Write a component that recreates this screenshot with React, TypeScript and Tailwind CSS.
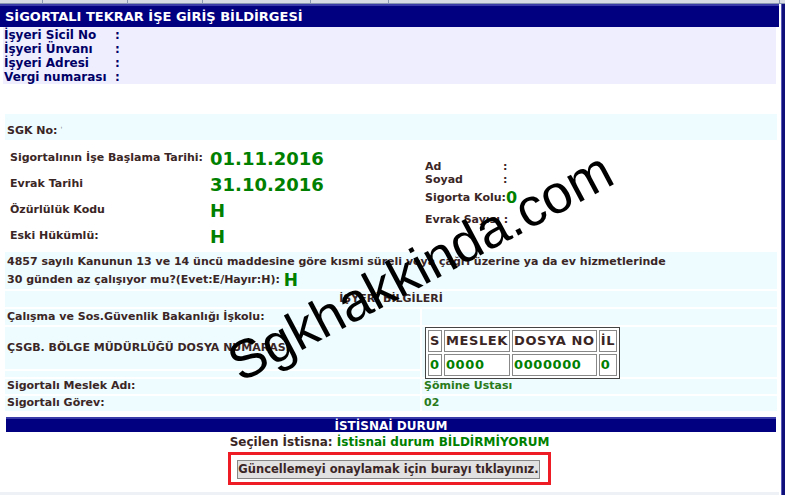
import React from "react";

const label = "text-[#3b2626] font-bold";
const green = "text-[#008000] font-bold";

function Cell({ className = "", children }: { className?: string; children?: React.ReactNode }) {
  return <div className={`bg-[#eefcff] ${className}`}>{children}</div>;
}

export default function App() {
  return (
    <div className="relative h-[495px] w-[785px] overflow-hidden bg-white font-['DejaVu_Sans',Verdana,sans-serif] text-[11px]">
      {/* tab strip remnants */}
      <div className="flex h-[4px] border-b border-[#8a97b0] bg-[#d6dbe4]">
        {[43, 85, 75, 108, 78, 391].map((w, i) => (
          <div key={i} className="h-full border-r border-[#8a97b0]" style={{ width: w }} />
        ))}
      </div>

      <div className="flex h-[491px]">
        <div className="flex w-[779px] flex-col">
          {/* title */}
          <div className="flex h-[23px] items-center border-t-2 border-[#3a3aa8] bg-[#000080] pl-[5px] text-[13px] font-bold text-white">
            SİGORTALI TEKRAR İŞE GİRİŞ BİLDİRGESİ
          </div>

          {/* employer box */}
          <div className="mx-[3px] grid h-[57px] grid-cols-[111px_1fr] content-start bg-[#eeeeff] pl-[1px] pt-[1px] text-[12px] leading-[14px] font-bold text-[#000066]">
            <span>İşyeri Sicil No</span>
            <span>:</span>
            <span>İşyeri Ünvanı</span>
            <span>:</span>
            <span>İşyeri Adresi</span>
            <span>:</span>
            <span>Vergi numarası</span>
            <span>:</span>
          </div>

          <div className="h-[30px]" />

          {/* SGK no */}
          <div className="ml-[5px] mr-[2px] flex h-[26px] items-end bg-[#eefcff] pb-[1px] pl-[2px]">
            <span className={label}>SGK No:</span>
            <span className="mb-[4px] ml-[3px] text-[7px] text-[#555]">ˈ</span>
          </div>

          {/* person info */}
          <div className="flex h-[112px]">
            <div className="w-[420px] pl-[10px] pt-[5px]">
              {[
                ["Sigortalının İşe Başlama Tarihi:", "01.11.2016"],
                ["Evrak Tarihi", "31.10.2016"],
                ["Özürlülük Kodu", "H"],
                ["Eski Hükümlü:", "H"],
              ].map(([l, v]) => (
                <div key={l} className="flex h-[26px] items-center">
                  <span className={`w-[200px] ${label}`}>{l}</span>
                  <span className={`${green} text-[18px]`}>{v}</span>
                </div>
              ))}
            </div>
            <div className="pl-[5px] pt-[21px]">
              <div className="flex h-[13px] items-center">
                <span className={`w-[78px] ${label}`}>Ad</span>
                <span className={label}>:</span>
              </div>
              <div className="flex h-[13px] items-center">
                <span className={`w-[78px] ${label}`}>Soyad</span>
                <span className={label}>:</span>
              </div>
              <div className="flex h-[22px] items-center">
                <span className={label}>Sigorta Kolu:</span>
                <span className={`${green} text-[16px]`}>0</span>
              </div>
              <div className="flex h-[22px] items-center">
                <span className={label}>Evrak Sayısı :</span>
              </div>
            </div>
          </div>

          {/* table rows */}
          <div className="ml-[5px] mr-[2px] flex flex-col gap-[2px]">
            <Cell className="h-[37px] pl-[2px] pt-[1px] leading-[18px]">
              <div className={label}>
                4857 sayılı Kanunun 13 ve 14 üncü maddesine göre kısmi süreli veya çağrı üzerine ya da ev hizmetlerinde
              </div>
              <div className="flex items-center">
                <span className={label}>30 günden az çalışıyor mu?(Evet:E/Hayır:H):</span>
                <span className={`${green} ml-[4px] text-[17px]`}>H</span>
              </div>
            </Cell>
            <Cell className="flex h-[16px] items-center justify-center">
              <span className="font-semibold text-[#3b2626]">İŞYERİ BİLGİLERİ</span>
            </Cell>
            <div className="flex h-[16px] gap-[2px]">
              <Cell className={`flex w-[415px] items-center pl-[2px] ${label}`}>Çalışma ve Sos.Güvenlik Bakanlığı İşkolu:</Cell>
              <Cell className="flex-1" />
            </div>
            <div className="flex h-[50px] gap-[2px]">
              <div className="flex w-[415px] flex-col gap-[2px]">
                <Cell className={`flex h-[42px] items-center pl-[2px] ${label}`}>ÇSGB. BÖLGE MÜDÜRLÜĞÜ DOSYA NUMARASI</Cell>
                <Cell className="flex-1" />
              </div>
              <Cell className="flex-1 pl-[3px]">
                <table className="border-separate border border-[#444] bg-white text-[13px] leading-[20px] tracking-[0.6px]">
                  <tbody>
                    <tr className="text-[#3b2626]">
                      {["S", "MESLEK", "DOSYA NO", "İL"].map((h) => (
                        <td key={h} className="border border-[#888] px-[1px] font-bold">
                          {h}
                        </td>
                      ))}
                    </tr>
                    <tr>
                      {["0", "0000", "0000000", "0"].map((h, i) => (
                        <td key={i} className={`border border-[#888] px-[1px] ${green}`}>
                          {h}
                        </td>
                      ))}
                    </tr>
                  </tbody>
                </table>
              </Cell>
            </div>
            <div className="flex h-[15px] gap-[2px]">
              <Cell className={`flex w-[415px] items-center pl-[2px] ${label}`}>Sigortalı Meslek Adı:</Cell>
              <Cell className="flex flex-1 items-center pl-[2px] font-bold text-[#2a7a1a]">Şömine Ustası</Cell>
            </div>
            <div className="flex h-[15px] gap-[2px]">
              <Cell className={`flex w-[415px] items-center pl-[2px] ${label}`}>Sigortalı Görev:</Cell>
              <Cell className="flex flex-1 items-center pl-[2px] font-bold text-[#2a7a1a]">02</Cell>
            </div>
          </div>

          {/* exception */}
          <div className="ml-[6px] mr-[3px] mt-[6px] flex h-[15px] items-center justify-center border-t-2 border-[#3a3aa8] bg-[#000080] text-[12px] font-bold text-white">
            İSTİSNAİ DURUM
          </div>
          <div className="mt-[1px] flex justify-center text-[12px] font-bold">
            <span className="text-[#3b2626]">Seçilen İstisna:&nbsp;</span>
            <span className="text-[#008000]">İstisnai durum BİLDİRMİYORUM</span>
          </div>
          <div className="mt-[1px] flex justify-center">
            <div className="flex h-[33px] w-[323px] items-center justify-center border-[3px] border-[#ee1c25] pr-[2px] pt-[1px]">
              <button className="h-[19px] w-[303px] whitespace-nowrap border border-[#888] bg-[#e1e1e1] p-0 text-[11.5px] font-bold text-[#3b2626]">
                Güncellemeyi onaylamak için burayı tıklayınız.
              </button>
            </div>
          </div>
          <div className="mt-auto h-[3px] bg-[#eef1f5]" />
        </div>
        <div className="w-[2px] bg-white" />
        <div className="w-[4px] border-l border-[#5a5ab8] bg-[#10107a]" />
      </div>

      {/* watermark */}
      <div className="pointer-events-none absolute left-[420px] top-[266px] -translate-x-1/2 -translate-y-1/2 -rotate-[28deg] whitespace-nowrap font-['Liberation_Sans',Arial,sans-serif] text-[54px] leading-none text-black">
        Sgkhakkinda.com
      </div>
    </div>
  );
}
